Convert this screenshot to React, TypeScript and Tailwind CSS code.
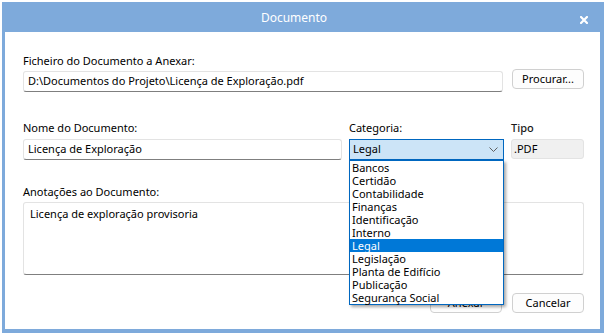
import React from 'react';

const categorias = [
    'Bancos',
    'Certidão',
    'Contabilidade',
    'Finanças',
    'Identificação',
    'Interno',
    'Legal',
    'Legislação',
    'Planta de Edifício',
    'Publicação',
    'Segurança Social',
];

const inputCls =
    'h-[21px] bg-white border border-[#e3e3e3] border-b-[#7f7f7f] rounded-[3px] pl-[4px] flex items-center text-black';

const btnCls =
    'w-[72px] h-[20px] bg-[#fdfdfd] border border-[#d0d0d0] rounded-[4px] flex items-center justify-center text-[11px] text-black';

export default function App() {
    const selected = 'Legal';

    return (
        <div
            className="w-[605px] h-[336px] bg-white pt-[2px] pl-[2px] pr-[1px] pb-[3px]"
            style={{ fontFamily: '"Noto Sans", "Open Sans", sans-serif' }}
        >
            <div className="w-full h-full border-[3px] border-t-0 border-r-[4px] border-b-[4px] border-[#7eaadb] flex flex-col">
                {/* Title bar */}
                <div className="h-[30px] bg-[#7eaadb] flex items-center pl-[6px]">
                    <div className="flex-1 text-center text-white text-[12px] mt-px">Documento</div>
                    <div className="w-[14px] mr-[9px] flex items-center justify-center mt-[5px]">
                        <svg width="8" height="8" viewBox="0 0 8 8">
                            <path d="M1 1 L7 7 M7 1 L1 7" stroke="white" strokeWidth="2.2" strokeLinecap="square" />
                        </svg>
                    </div>
                </div>

                {/* Body */}
                <div className="flex-1 flex flex-col pl-[18px] pr-[16px] pt-[21px] text-[11px] text-black">
                    <div className="h-[16px] leading-[16px]">Ficheiro do Documento a Anexar:</div>
                    <div className="flex items-start gap-[9px]">
                        <div className={`${inputCls} flex-1 mt-[2px]`}>
                            D:\Documentos do Projeto\Licença de Exploração.pdf
                        </div>
                        <button className={btnCls}>Procurar...</button>
                    </div>

                    <div className="flex items-start mt-[28px]">
                        <div className="w-[319px] flex flex-col">
                            <div className="h-[16px] leading-[16px]">Nome do Documento:</div>
                            <div className={`${inputCls} mt-[3px]`}>Licença de Exploração</div>
                        </div>
                        <div className="w-[155px] ml-[7px] flex flex-col">
                            <div className="h-[16px] leading-[16px]">Categoria:</div>
                            <div className="relative mt-[3px]">
                                <div className="h-[21px] bg-[#cce4f7] border border-[#0067c0] flex items-center justify-between pl-[3px] pr-[5px]">
                                    <span>{selected}</span>
                                    <svg width="9" height="6" viewBox="0 0 9 6">
                                        <path d="M0.5 0.5 L4.5 4.5 L8.5 0.5" fill="none" stroke="#5f5f5f" strokeWidth="1" />
                                    </svg>
                                </div>
                                <ul className="absolute left-0 top-[21px] w-[155px] bg-white border border-[#0067c0] shadow-[2px_2px_3px_rgba(0,0,0,0.35)] z-10">
                                    {categorias.map(c => (
                                        <li
                                            key={c}
                                            className={`h-[13px] leading-[13px] pl-[2px] ${c === selected ? 'bg-[#0078d7] text-white' : 'text-black'}`}
                                        >
                                            {c}
                                        </li>
                                    ))}
                                </ul>
                            </div>
                        </div>
                        <div className="w-[73px] ml-[7px] flex flex-col">
                            <div className="h-[16px] leading-[16px] font-medium text-[#1a1a1a]">Tipo</div>
                            <div className="h-[20px] mt-[3px] bg-[#f0f0f0] border border-[#e3e3e3] rounded-[3px] flex items-center pl-[2px]">
                                .PDF
                            </div>
                        </div>
                    </div>

                    <div className="h-[16px] leading-[16px] mt-[24px]">Anotações ao Documento:</div>
                    <div className="h-[73px] mt-[2px] bg-white border border-[#e3e3e3] border-b-[#7f7f7f] rounded-[3px] pl-[6px] pt-[3px]">
                        Licença de exploração provisoria
                    </div>

                    <div className="flex justify-end gap-[10px] mt-[18px]">
                        <button className={`${btnCls} border-[#0067c0]`}>Anexar</button>
                        <button className={btnCls}>Cancelar</button>
                    </div>
                </div>
            </div>
        </div>
    );
}
